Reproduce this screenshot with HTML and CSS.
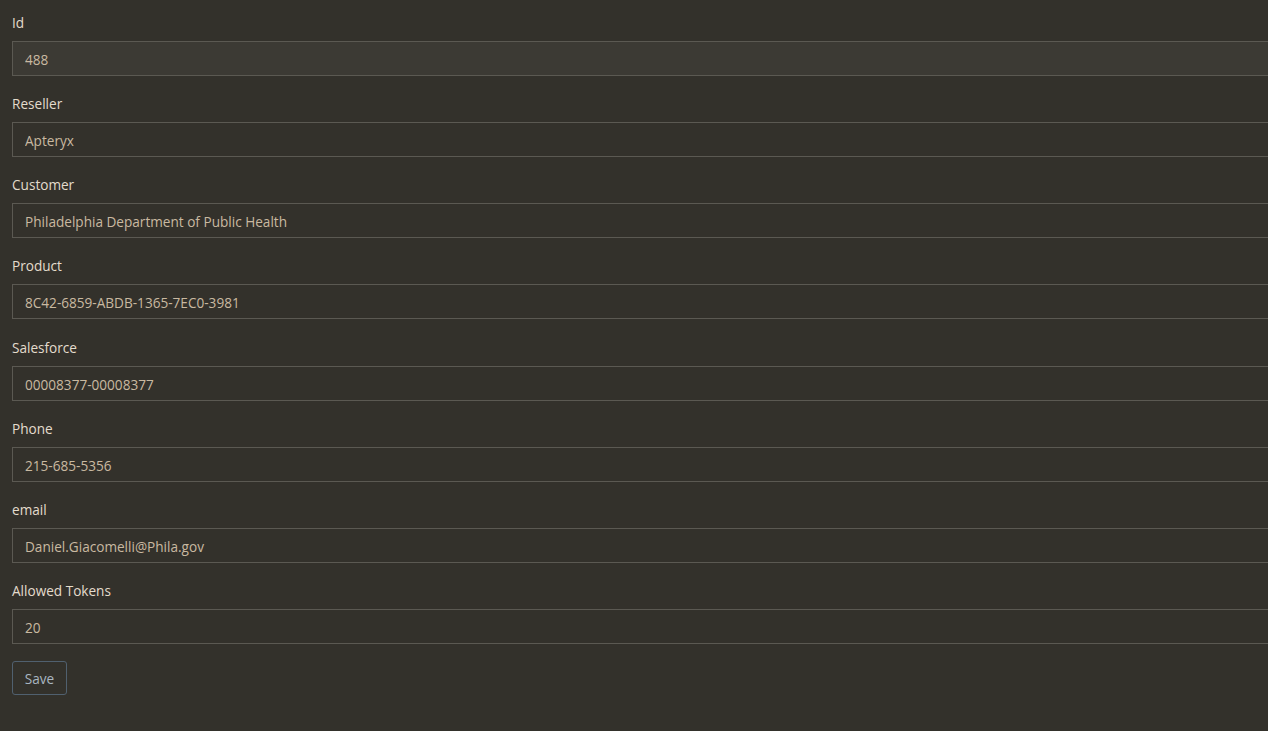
FILE: index.html
```html
<!DOCTYPE html>
<html lang="en">
<head>
<meta charset="utf-8">
<title>License details</title>
<link rel="stylesheet" href="styles.css">
</head>
<body>
<form class="edit-form">
  <div class="field">
    <label class="field-label" for="f-id">Id</label>
    <input class="field-input is-readonly" id="f-id" type="text" value="488" readonly>
  </div>
  <div class="field">
    <label class="field-label" for="f-reseller">Reseller</label>
    <input class="field-input" id="f-reseller" type="text" value="Apteryx">
  </div>
  <div class="field">
    <label class="field-label" for="f-customer">Customer</label>
    <input class="field-input" id="f-customer" type="text" value="Philadelphia Department of Public Health">
  </div>
  <div class="field">
    <label class="field-label" for="f-product">Product</label>
    <input class="field-input" id="f-product" type="text" value="8C42-6859-ABDB-1365-7EC0-3981">
  </div>
  <div class="field">
    <label class="field-label" for="f-salesforce">Salesforce</label>
    <input class="field-input" id="f-salesforce" type="text" value="00008377-00008377">
  </div>
  <div class="field">
    <label class="field-label" for="f-phone">Phone</label>
    <input class="field-input" id="f-phone" type="text" value="215-685-5356">
  </div>
  <div class="field">
    <label class="field-label" for="f-email">email</label>
    <input class="field-input" id="f-email" type="text" value="Daniel.Giacomelli@Phila.gov">
  </div>
  <div class="field">
    <label class="field-label" for="f-tokens">Allowed Tokens</label>
    <input class="field-input" id="f-tokens" type="text" value="20">
  </div>
  <div class="actions">
    <button class="btn-save" type="button">Save</button>
  </div>
</form>
</body>
</html>
```

FILE: styles.css
```css
html, body {
  margin: 0;
  padding: 0;
  height: 100%;
  overflow: hidden;
  background: #33312b;
}

body {
  font-family: "Open Sans", "Noto Sans", sans-serif;
  font-size: 13.6px;
  color: #e2dacb;
}

.edit-form {
  display: flex;
  flex-direction: column;
  gap: 17.15px;
  padding: 12px 0 0 12px;
  width: 1300px;
}

.field {
  display: flex;
  flex-direction: column;
}

.field-label {
  line-height: 21px;
  margin-bottom: 8px;
  color: #e4dccd;
}

.field-input {
  box-sizing: border-box;
  height: 35px;
  width: 100%;
  padding: 2px 12px 0;
  border: 1px solid #5b5952;
  border-radius: 0;
  background: #33312b;
  color: #c9b9a1;
  font: inherit;
  outline: none;
}

.field-input.is-readonly {
  background: #3c3a34;
}

.actions {
  display: flex;
}

.btn-save {
  box-sizing: border-box;
  height: 34px;
  width: 55px;
  padding: 1px 0 0;
  border: 1px solid #50606f;
  border-radius: 3px;
  background: transparent;
  color: #a9b6c0;
  font: inherit;
  cursor: pointer;
}
```
